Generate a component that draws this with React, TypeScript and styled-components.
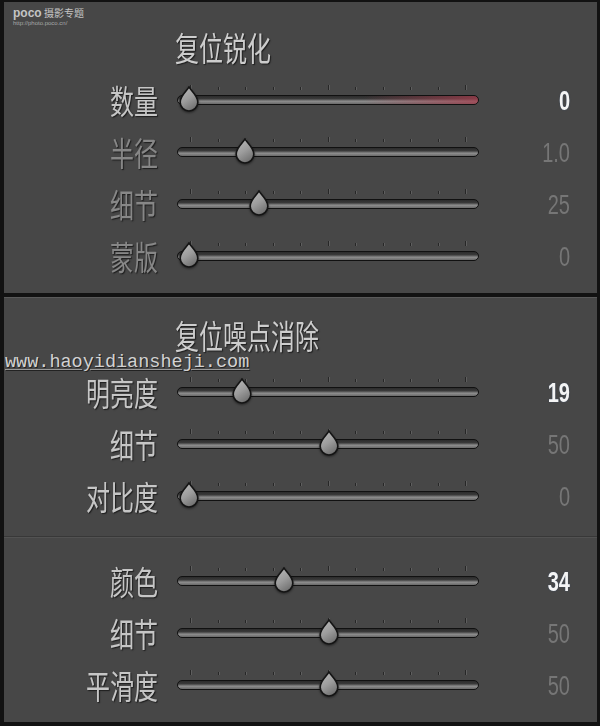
import styled, { createGlobalStyle } from 'styled-components';

const GlobalStyle = createGlobalStyle`
  * { box-sizing: border-box; }
  html, body { margin: 0; padding: 0; background: #121212; }
  body { font-family: 'Noto Sans CJK SC', 'Noto Sans', sans-serif; }
`;

type SliderDef = {
  label: string;
  value: string;
  pct: number;
  bright?: boolean;
  dimLabel?: boolean;
  red?: boolean;
};

const sharpen: SliderDef[] = [
  { label: '数量', value: '0', pct: 0, bright: true, red: true },
  { label: '半径', value: '1.0', pct: 0.2, dimLabel: true },
  { label: '细节', value: '25', pct: 0.25, dimLabel: true },
  { label: '蒙版', value: '0', pct: 0, dimLabel: true },
];

const luminance: SliderDef[] = [
  { label: '明亮度', value: '19', pct: 0.19, bright: true },
  { label: '细节', value: '50', pct: 0.5 },
  { label: '对比度', value: '0', pct: 0 },
];

const color: SliderDef[] = [
  { label: '颜色', value: '34', pct: 0.34, bright: true },
  { label: '细节', value: '50', pct: 0.5 },
  { label: '平滑度', value: '50', pct: 0.5 },
];

export default function App() {
  return (
    <>
      <GlobalStyle />
      <Frame>
        <Panel $height={291}>
          <Title $mb={12}>
            <Stretch>复位锐化</Stretch>
          </Title>
          {sharpen.map((s) => (
            <SliderRow key={s.label} {...s} />
          ))}
          <Logo>
            <LogoTop>
              <b>poco</b> 摄影专题
            </LogoTop>
            <LogoUrl>http://photo.poco.cn/</LogoUrl>
          </Logo>
        </Panel>
        <Panel $height={425} $topLine>
          <Title $mb={16}>
            <Stretch>复位噪点消除</Stretch>
          </Title>
          <Group>
            {luminance.map((s, i) => (
              <SliderRow key={i} {...s} />
            ))}
          </Group>
          <Divider />
          <Group $pt={17}>
            {color.map((s, i) => (
              <SliderRow key={i} {...s} />
            ))}
          </Group>
          <Watermark>www.haoyidiansheji.com</Watermark>
        </Panel>
      </Frame>
    </>
  );
}

function SliderRow({ label, value, pct, bright, dimLabel, red }: SliderDef) {
  return (
    <Row>
      <Label $dim={dimLabel}>
        <Stretch>{label}</Stretch>
      </Label>
      <SliderBox>
        <Ticks>
          {Array.from({ length: 11 }).map((_, i) => (
            <Tick key={i} $tall={i === 0 || i === 5 || i === 10} />
          ))}
        </Ticks>
        <Track $red={red} />
        <Thumb style={{ left: 12 + pct * 280 - 10 }}>
          <svg width="20" height="26" viewBox="0 0 20 26">
            <defs>
              <linearGradient id="thumbFill" x1="0.2" y1="0" x2="0.7" y2="1">
                <stop offset="0" stopColor="#b8b8b8" />
                <stop offset="0.5" stopColor="#9c9c9c" />
                <stop offset="1" stopColor="#6e6e6e" />
              </linearGradient>
            </defs>
            <path
              d="M10 1 C11.4 4.2 18.8 9.2 18.8 16.2 A8.8 8.8 0 0 1 1.2 16.2 C1.2 9.2 8.6 4.2 10 1 Z"
              fill="url(#thumbFill)"
              stroke="#141414"
              strokeWidth="1.6"
            />
          </svg>
        </Thumb>
      </SliderBox>
      <Value $bright={bright}>
        <Stretch>{value}</Stretch>
      </Value>
    </Row>
  );
}

const Frame = styled.div`
  width: 600px;
  height: 726px;
  background: #121212;
  padding: 2px 3px 4px 4px;
  display: flex;
  flex-direction: column;
  gap: 4px;
  overflow: hidden;
`;

const Panel = styled.section<{ $height: number; $topLine?: boolean }>`
  position: relative;
  height: ${(p) => p.$height}px;
  background: #474747;
  padding-top: ${(p) => (p.$topLine ? 22 : 30)}px;
  border-top: ${(p) => (p.$topLine ? '1px solid #5a5a5a' : 'none')};
  display: flex;
  flex-direction: column;
`;

const Title = styled.div<{ $mb: number }>`
  height: 30px;
  line-height: 30px;
  margin-bottom: ${(p) => p.$mb}px;
  padding-left: 171px;
  font-size: 24px;
  color: #cdcdcd;
  text-shadow: 1px 1px 1px #1c1c1c;
`;

const Stretch = styled.span`
  display: inline-block;
  transform: scaleY(1.38);
`;

const Group = styled.div<{ $pt?: number }>`
  padding-top: ${(p) => p.$pt ?? 0}px;
  padding-bottom: 14px;
`;

const Divider = styled.div`
  height: 2px;
  border-top: 1px solid #383838;
  border-bottom: 1px solid #525252;
`;

const Row = styled.div`
  height: 52px;
  display: grid;
  grid-template-columns: 154px 302px 1fr;
  column-gap: 19px;
  align-items: center;
  padding-right: 27px;
`;

const Label = styled.div<{ $dim?: boolean }>`
  text-align: right;
  font-size: 24px;
  line-height: 30px;
  color: ${(p) => (p.$dim ? '#878787' : '#c6c6c6')};
  text-shadow: 1px 1px 1px #1c1c1c;
  white-space: nowrap;
`;

const Value = styled.div<{ $bright?: boolean }>`
  text-align: right;
  font-family: 'Liberation Sans', Arial, sans-serif;
  font-size: 20px;
  line-height: 30px;
  color: ${(p) => (p.$bright ? '#f4f4f4' : '#767676')};
  font-weight: ${(p) => (p.$bright ? 700 : 400)};
  text-shadow: ${(p) => (p.$bright ? '0 0 1px #3a5070' : 'none')};
`;

const SliderBox = styled.div`
  position: relative;
  height: 52px;
  padding-top: 12px;
  display: flex;
  flex-direction: column;
`;

const Ticks = styled.div`
  height: 4px;
  margin-bottom: 5px;
  padding: 0 13px;
  display: flex;
  justify-content: space-between;
  align-items: flex-end;
`;

const Tick = styled.span<{ $tall?: boolean }>`
  width: 1px;
  height: ${(p) => (p.$tall ? 5 : 3)}px;
  background: #272727;
  box-shadow: 1px 0 0 #5e5e5e;
`;

const Track = styled.div<{ $red?: boolean }>`
  height: 10px;
  border-radius: 6px;
  border: 1.5px solid #111;
  background: ${(p) =>
      p.$red
        ? 'linear-gradient(to right, rgba(160,60,75,0) 62%, rgba(165,62,78,0.75) 100%),'
        : ''}
    linear-gradient(to bottom, #2c2c2c 0%, #3a3a3a 35%, #8e8e8e 65%, #686868 100%);
`;

const Thumb = styled.div`
  position: absolute;
  top: 12px;
  width: 20px;
  height: 26px;
  display: flex;
  filter: drop-shadow(0 1px 1px rgba(0, 0, 0, 0.5));
`;

const Logo = styled.div`
  position: absolute;
  left: 9px;
  top: 5px;
  color: #c4c4c4;
  line-height: 1;
`;

const LogoTop = styled.div`
  font-size: 10px;
  white-space: nowrap;

  b {
    font-family: 'Liberation Sans', Arial, sans-serif;
    font-size: 12px;
    font-weight: 700;
  }
`;

const LogoUrl = styled.div`
  margin-top: 1px;
  font-family: 'Liberation Sans', Arial, sans-serif;
  font-size: 6px;
  color: #a8a8a8;
  white-space: nowrap;
`;

const Watermark = styled.div`
  position: absolute;
  left: 1px;
  top: 54px;
  font-family: 'Liberation Mono', 'Courier New', monospace;
  font-size: 18.5px;
  line-height: 22px;
  color: #d2d2d2;
  text-decoration: underline;
  text-decoration-color: #9a9a9a;
  text-underline-offset: 2px;
  text-shadow: 1px 1px 0 #222;
  white-space: nowrap;
`;
